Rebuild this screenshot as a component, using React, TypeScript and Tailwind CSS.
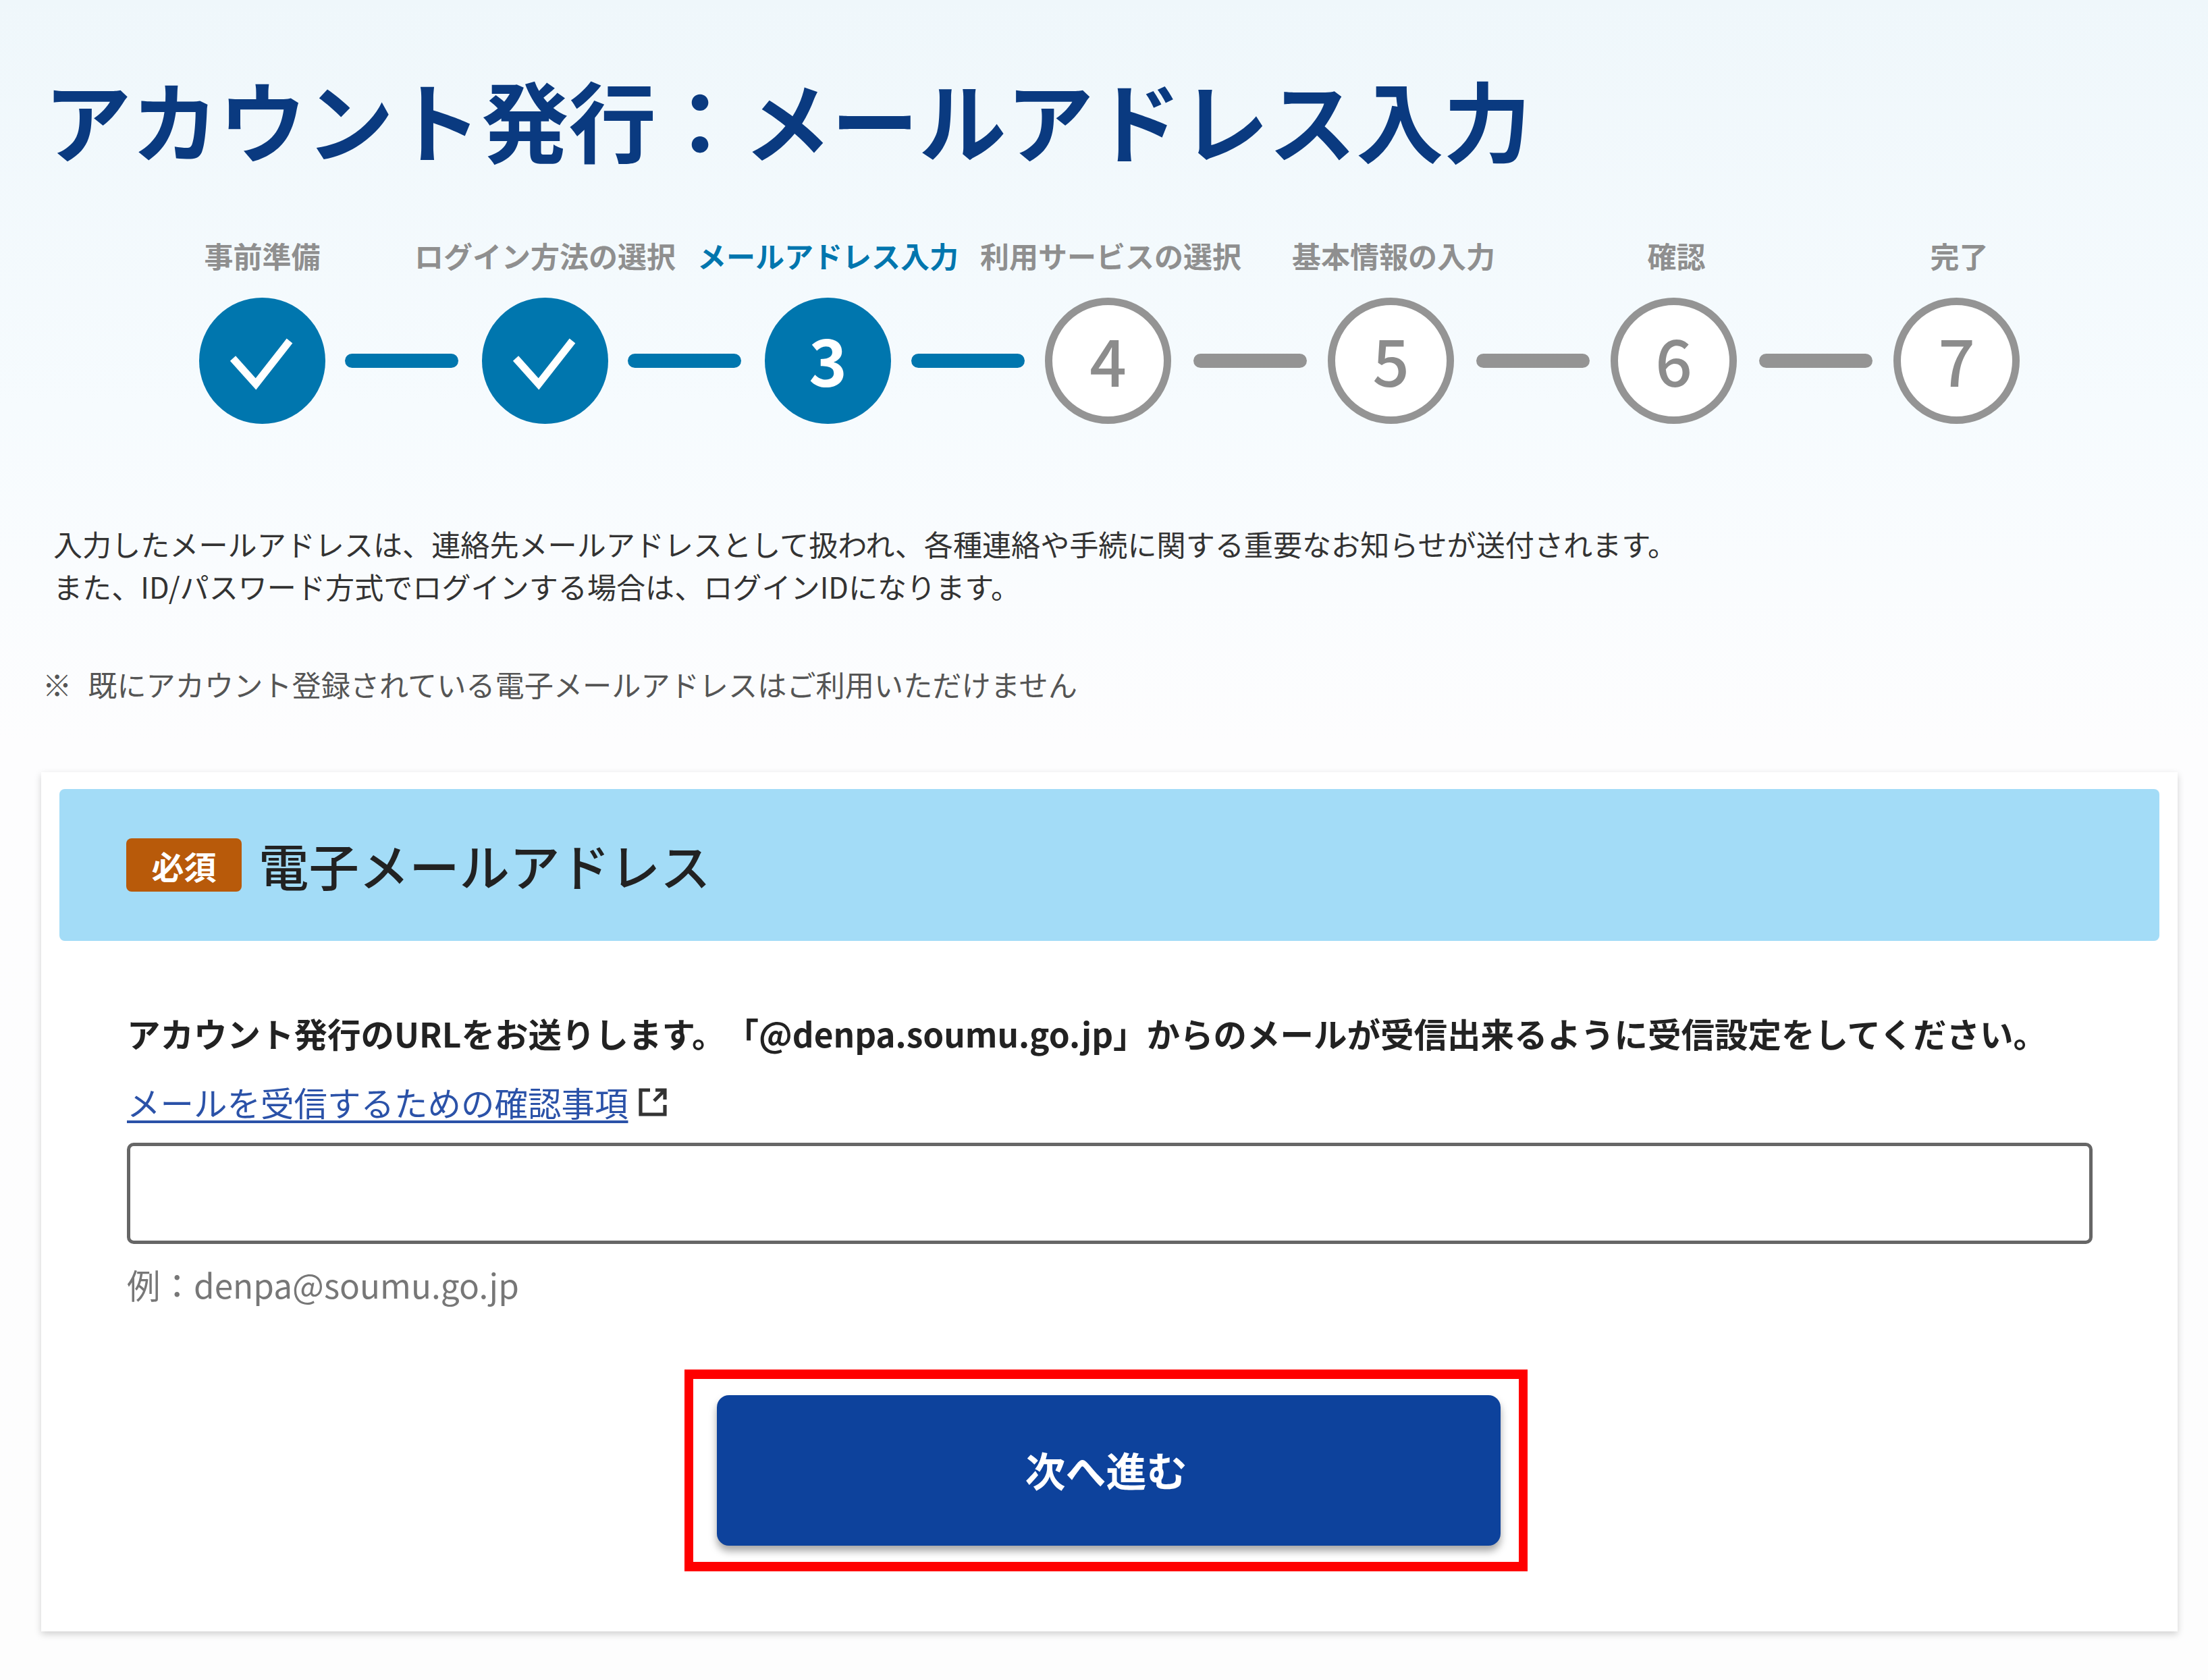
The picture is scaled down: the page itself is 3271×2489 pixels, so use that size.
const FONT = "font-['Noto_Sans_CJK_JP','Noto_Sans',sans-serif]"

const STEPS = [
  { label: '事前準備', state: 'done' },
  { label: 'ログイン方法の選択', state: 'done' },
  { label: 'メールアドレス入力', state: 'current' },
  { label: '利用サービスの選択', state: 'todo' },
  { label: '基本情報の入力', state: 'todo' },
  { label: '確認', state: 'todo' },
  { label: '完了', state: 'todo' },
]

function CheckMark() {
  return (
    <svg viewBox="0 0 187 187" className="h-[187px] w-[187px]" fill="none">
      <path d="M50 90 L84 128 L134 64" stroke="#fff" strokeWidth="11" strokeLinejoin="miter" />
    </svg>
  )
}

function StepCircle({ state, num }: { state: string; num: number }) {
  if (state === 'done') {
    return (
      <span className="flex h-[187px] w-[187px] shrink-0 items-center justify-center rounded-full bg-[#0076ae]">
        <CheckMark />
      </span>
    )
  }
  if (state === 'current') {
    return (
      <span className="flex h-[187px] w-[187px] shrink-0 items-center justify-center rounded-full bg-[#0076ae] pb-[5px] text-[96px] leading-none font-bold text-white">
        {num}
      </span>
    )
  }
  return (
    <span className="flex h-[187px] w-[187px] shrink-0 items-center justify-center rounded-full border-[11px] border-[#949494] bg-white pb-[5px] text-[96px] leading-none font-medium text-[#8c8c8c]">
      {num}
    </span>
  )
}

function connectorClass(i: number) {
  if (i < 2) return 'ml-[29px] mr-[35px] bg-[#0076ae]'
  if (i === 2) return 'ml-[30px] mr-[30px] bg-[#0076ae]'
  return 'ml-[33px] mr-[31px] bg-[#949494]'
}

export default function App() {
  return (
    <div className={`${FONT} h-[2489px] w-[3271px] overflow-hidden bg-[linear-gradient(180deg,#eff7fb_0px,#f6fbfe_600px,#fdfdfe_1100px,#fdfdfd_2489px)] pt-[95px] [text-spacing-trim:space-all]`}>
      <h1 className="ml-[65px] text-[129.6px] leading-[160px] font-bold whitespace-nowrap text-[#0a3a80]">
        アカウント発行：メールアドレス入力
      </h1>

      {/* Stepper */}
      <div className="mt-[93px] ml-[179px] grid w-[2933px] grid-cols-7">
        {STEPS.map((step) => (
          <p
            key={step.label}
            className={`text-center text-[43px] leading-[60px] font-bold whitespace-nowrap ${step.state === 'current' ? 'text-[#0076ae]' : 'text-[#8f8f8f]'}`}
          >
            {step.label}
          </p>
        ))}
      </div>
      <div className="mt-[33px] ml-[295px] flex items-center">
        {STEPS.map((step, i) => (
          <div key={step.label} className="flex items-center">
            <StepCircle state={step.state} num={i + 1} />
            {i < STEPS.length - 1 && (
              <span className={`h-[21px] w-[168px] rounded-full ${connectorClass(i)}`} />
            )}
          </div>
        ))}
      </div>

      <div className="mt-[146px] ml-[79px] text-[43.1px] leading-[63px] whitespace-nowrap text-[#333]">
        <p>入力したメールアドレスは、連絡先メールアドレスとして扱われ、各種連絡や手続に関する重要なお知らせが送付されます。</p>
        <p>また、ID/パスワード方式でログインする場合は、ログインIDになります。</p>
      </div>

      <p className="mt-[82px] ml-[63px] flex gap-[24px] text-[43.2px] leading-[63px] whitespace-nowrap text-[#555]">
        <span>※</span>
        <span>既にアカウント登録されている電子メールアドレスはご利用いただけません</span>
      </p>

      {/* Card */}
      <section className="mt-[99px] ml-[61px] w-[3165px] bg-white px-[27px] pt-[25px] pb-[89px] shadow-[0_4px_10px_rgba(0,0,0,0.18)]">
        <div className="flex h-[225px] items-center gap-[25px] rounded-[8px] bg-[#a3dcf7] pl-[99px]">
          <span className="flex h-[79px] w-[171px] items-center justify-center rounded-[8px] bg-[#b85a0a] text-[48px] font-bold text-white">
            必須
          </span>
          <span className="text-[74.4px] leading-none font-medium text-[#222]">電子メールアドレス</span>
        </div>

        <div className="pl-[100px]">
          <p className="mt-[105px] text-[49.5px] leading-[63px] font-bold whitespace-nowrap text-[#222]">
            アカウント発行のURLをお送りします。「@denpa.soumu.go.jp」からのメールが受信出来るように受信設定をしてください。
          </p>
          <div className="mt-[39px] flex h-[63px] items-center gap-[12px] text-[49.5px] leading-[63px]">
            <a className="text-[#2b52a8] underline underline-offset-[6px]">メールを受信するための確認事項</a>
            <svg viewBox="0 0 24 24" className="h-[48px] w-[48px]" fill="none" stroke="#333" strokeWidth="2.6">
              <path d="M10 3 H3 V21 H21 V14" />
              <path d="M13 11 L21 3 M14 3 H21 V10" />
            </svg>
          </div>
          <input
            type="text"
            className="mt-[29px] block h-[150px] w-[2912px] rounded-[10px] border-[5px] border-[#666] bg-white"
          />
          <p className="mt-[28px] text-[49.5px] leading-[63px] text-[#777]">例：denpa@soumu.go.jp</p>

          {/* Highlighted button */}
          <div className="mt-[95px] ml-[826px] w-[1249px] border-x-[13px] border-y-[14px] border-[#ff0000] bg-white pt-[24px] pr-[27px] pb-[24px] pl-[35px]">
            <button
              type="button"
              className="flex h-[223px] w-[1161px] items-center justify-center rounded-[18px] bg-[#0d429c] pr-[8px] pb-[4px] text-[60px] font-bold text-white shadow-[0_8px_12px_rgba(0,0,0,0.35)]"
            >
              次へ進む
            </button>
          </div>
        </div>
      </section>
    </div>
  )
}
